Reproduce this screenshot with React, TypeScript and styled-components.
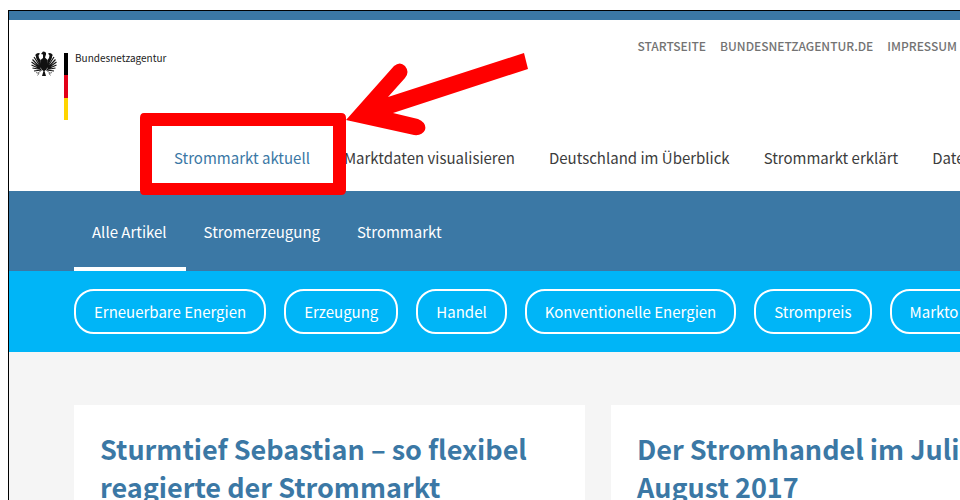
import React from "react";
import styled, { createGlobalStyle } from "styled-components";

const BLUE = "#3b78a5";
const CYAN = "#00b5f7";

const GlobalStyle = createGlobalStyle`
  *, *::before, *::after { box-sizing: border-box; }
  body {
    margin: 0;
    background: #fff;
    color: #3c3c3c;
    font-family: "Noto Sans CJK SC", "Noto Sans", sans-serif;
    font-size: 15px;
    line-height: 24px;
  }
  a { color: inherit; text-decoration: none; white-space: nowrap; }
`;

const Screen = styled.div`
  position: relative;
  height: 100vh;
  padding: 10px 0 0 8px;
  overflow: hidden;
`;

const Frame = styled.div`
  display: flex;
  flex-direction: column;
  min-height: 100%;
  border: solid #000;
  border-width: 1px 0 0 1px;
  overflow: hidden;
`;

const Header = styled.header`
  border-top: 9px solid ${BLUE};
`;

const TopRow = styled.div`
  display: flex;
  justify-content: space-between;
  height: 114px;
  padding: 14px 3px 0 22px;
`;

const Brand = styled.a`
  display: flex;
  align-items: flex-start;
  gap: 7px;
  padding-top: 17px;
  color: #222;
  font-size: 10px;
  line-height: 14px;
`;

const FlagBar = styled.span`
  width: 4px;
  height: 67px;
  margin-top: 2px;
  background: linear-gradient(#000 0 33%, #e30018 33% 67%, #ffd500 67%);
`;

const MetaNav = styled.nav`
  display: flex;
  gap: 14px;
  color: #737373;
  font-size: 12px;
  font-weight: 500;
`;

const MainNav = styled.nav`
  display: flex;
  gap: 34px;
  padding: 12px 0 21px 165px;
`;

const MainLink = styled.a<{ $active?: boolean }>`
  color: ${(p) => (p.$active ? BLUE : "#3c3c3c")};
`;

const SubNav = styled.nav`
  display: flex;
  padding-left: 65px;
  background: ${BLUE};
  color: #fff;
`;

const SubLink = styled.a<{ $active?: boolean }>`
  padding: 29px 19px 23px 18px;
  border-bottom: 4px solid ${(p) => (p.$active ? "#fff" : "transparent")};
`;

const TagBar = styled.nav`
  display: flex;
  gap: 18px;
  padding: 18px 0 18px 65px;
  background: ${CYAN};
  color: #fff;
`;

const Tag = styled.a`
  padding: 9px 18px 8px;
  border: 2px solid #fff;
  border-radius: 20px;
`;

const Articles = styled.main`
  flex: 1;
  display: grid;
  grid-template-columns: repeat(2, minmax(511px, 1fr));
  gap: 26px;
  padding: 53px 0 0 65px;
  background: #f5f5f5;
`;

const Card = styled.article`
  padding: 25px 26px;
  background: #fff;
`;

const Title = styled.h2`
  margin: 0;
  color: ${BLUE};
  font-size: 27px;
  font-weight: 700;
  line-height: 38px;
`;

const Annotation = styled.svg`
  position: absolute;
  top: 50px;
  left: 139px;
  pointer-events: none;
`;

const Eagle = () => (
  <svg width="26" height="26" viewBox="0 0 52 52" aria-hidden="true">
    <g fill="none" stroke="#111" strokeWidth="2.4">
      <path d="M21 32L10 8M20 33L6 12M19 34L3 17M19 35L1 22M19 36L1 28M20 37L3 34M21 38L6 40" />
      <path d="M31 32L42 8M32 33L46 12M33 34L49 17M33 35L51 22M33 36L51 28M32 37L49 34M31 38L46 40" />
    </g>
    <path d="M19 30L11 16L9 7Q13 2 18 5L15 9Q15 14 19 18ZM33 30L41 16L43 7Q39 2 34 5L37 9Q37 14 33 18Z" fill="#111" />
    <path d="M20 6L24 1Q31 1 30 7L28 13L33 18L34 28L31 37L27 40L30 50H22L25 40L21 37L18 28L19 18L24 14L24 7Z" fill="#111" />
    <path d="M22 38L14 44M30 38L38 44M10 43l6 2l-3 4M42 43l-6 2l3 4" fill="none" stroke="#777" strokeWidth="2" />
  </svg>
);

const mainLinks = ["Strommarkt aktuell", "Marktdaten visualisieren", "Deutschland im Überblick", "Strommarkt erklärt", "Daten"];
const subLinks = ["Alle Artikel", "Stromerzeugung", "Strommarkt"];
const tags = ["Erneuerbare Energien", "Erzeugung", "Handel", "Konventionelle Energien", "Strompreis", "Markto"];

export default function App() {
  return (
    <Screen>
      <GlobalStyle />
      <Frame>
        <Header>
          <TopRow>
            <Brand href="#">
              <Eagle />
              <FlagBar />
              Bundesnetzagentur
            </Brand>
            <MetaNav>
              <a href="#">STARTSEITE</a>
              <a href="#">BUNDESNETZAGENTUR.DE</a>
              <a href="#">IMPRESSUM</a>
            </MetaNav>
          </TopRow>
          <MainNav>
            {mainLinks.map((label, i) => (
              <MainLink href="#" key={label} $active={i === 0}>{label}</MainLink>
            ))}
          </MainNav>
        </Header>
        <SubNav>
          {subLinks.map((label, i) => (
            <SubLink href="#" key={label} $active={i === 0}>{label}</SubLink>
          ))}
        </SubNav>
        <TagBar>
          {tags.map((label) => <Tag href="#" key={label}>{label}</Tag>)}
        </TagBar>
        <Articles>
          <Card>
            <Title>Sturmtief Sebastian – so flexibel<br />reagierte der Strommarkt</Title>
          </Card>
          <Card>
            <Title>Der Stromhandel im Juli<br />August 2017</Title>
          </Card>
        </Articles>
      </Frame>
      <Annotation width="392" height="148" viewBox="139 50 392 148" aria-hidden="true">
        <path fillRule="evenodd" d="M144 113H341Q346 113 346 118V190Q346 195 341 195H144Q140 195 140 190V118Q140 113 144 113ZM152 126V183H333V126Z" fill="#f00" />
        <path d="M346 120L394 66Q400 61 405 66Q410 72 405 78L388 97L524 53L528 69L393 113L418 119Q427 123 425 130Q422 136 414 135Z" fill="#f00" />
      </Annotation>
    </Screen>
  );
}
